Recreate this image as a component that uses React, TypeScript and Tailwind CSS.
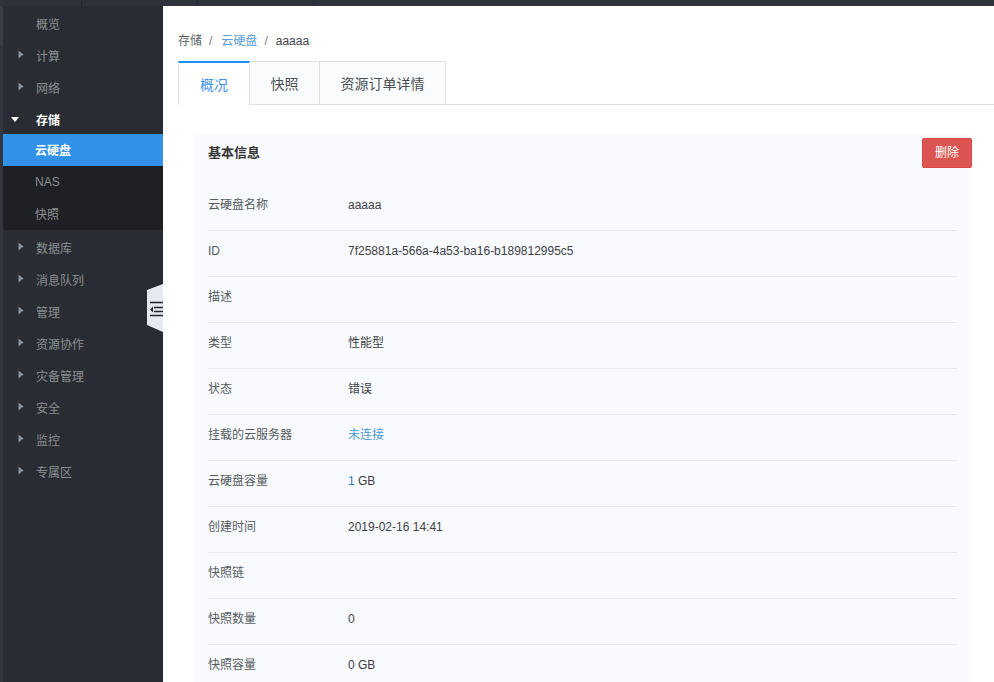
function Arrow() {
  return (
    <svg width="6" height="9" viewBox="0 0 6 9" className="absolute left-[15px] top-[10px]">
      <path d="M0.5 0.5 L5.5 4.5 L0.5 8.5 Z" fill="#87909a" />
    </svg>
  );
}
function Item({ label, arrow = true }: { label: string; arrow?: boolean }) {
  return (
    <div className="relative h-8 pl-[33px] leading-[34px] text-[12px] text-[#8b8f94]">
      {arrow && <Arrow />}
      {label}
    </div>
  );
}
function Row({ label, children, last }: { label: string; children?: React.ReactNode; last?: boolean }) {
  return (
    <div className={`flex h-[46px] items-center pb-[6px] text-[12px] ${last ? "" : "border-b border-[#e6e9f0]"}`}>
      <div className="w-[140px] text-[#555a60]">{label}</div>
      <div className="text-[#3d4147]">{children}</div>
    </div>
  );
}
export default function App() {
  return (
    <div className="flex h-[682px] w-[994px] flex-col overflow-hidden bg-white font-['Liberation_Sans','Noto_Sans_CJK_SC',sans-serif]">
      <div className="flex h-[6px] shrink-0 bg-[#2f313b]">
        <div className="h-full w-[82px] border-r border-[#23252c]" />
        <div className="h-full w-[116px] border-r border-[#23252c]" />
        <div className="h-full w-[116px] border-r border-[#23252c]" />
      </div>
      <div className="flex min-h-0 flex-1">
        <aside className="relative flex w-[163px] shrink-0 border-l-[3px] border-[#33363f] bg-[#292c32]">
          <div className="absolute left-[-3px] top-0 h-[39px] w-[3px] bg-[#3b3e46]" />
          <div className="w-full py-[2px]">
            <Item label="概览" arrow={false} />
            <Item label="计算" />
            <Item label="网络" />
            <div className="relative h-[30px] pl-[33px] text-[12px] font-bold leading-[34px] text-white">
              <svg width="8" height="5" viewBox="0 0 8 5" className="absolute left-[8px] top-[13px]">
                <path d="M0 0 H8 L4 5 Z" fill="#ffffff" />
              </svg>
              存储
            </div>
            <div className="bg-[#1f2025]">
              <div className="h-8 bg-[#3291e9] pl-[32px] text-[12px] font-bold leading-[34px] text-white">云硬盘</div>
              <div className="h-8 pl-[32px] text-[12px] leading-8 text-[#8b8f94]">NAS</div>
              <div className="h-8 pl-[32px] text-[12px] leading-[34px] text-[#8b8f94]">快照</div>
            </div>
            <div className="h-[2px]" />
            <Item label="数据库" />
            <Item label="消息队列" />
            <Item label="管理" />
            <Item label="资源协作" />
            <Item label="灾备管理" />
            <Item label="安全" />
            <Item label="监控" />
            <Item label="专属区" />
          </div>
          <svg width="16" height="48" viewBox="0 0 16 48" className="absolute left-[144px] top-[278px]">
            <path d="M16 0 L0 6 V41 L16 48 Z" fill="#e6e9f2" />
            <path d="M3 18.5 H16 M7 23.5 H16 M7 27.5 H16 M3 31.5 H16" stroke="#23252c" strokeWidth="1.3" />
            <path d="M6 22.5 L3 25.5 L6 28.5 Z" fill="#23252c" />
          </svg>
        </aside>
        <main className="min-w-0 flex-1 pl-[15px]">
          <div className="flex h-[55px] items-start gap-[7px] pt-[28px] text-[12px] leading-[14px] text-[#5a5f66]">
            <span>存储</span>
            <span className="mr-[2px] text-[#777]">/</span>
            <span className="text-[#5a9ed6]">云硬盘</span>
            <span className="mr-[1px] text-[#777]">/</span>
            <span className="text-[#3d4147]">aaaaa</span>
          </div>
          <div className="flex h-[44px] border-b border-[#dde0e6] text-[14px]">
            <div className="flex h-[44px] w-[72px] items-center justify-center border-x border-[#dde0e6] border-t-2 border-t-[#1e90f0] bg-white pt-[2px] text-[#3f8fef]">概况</div>
            <div className="flex h-[43px] w-[70px] items-center justify-center border-r border-t border-[#dde0e6] bg-[#f9fbfd] pt-[2px] text-[#4b4f55]">快照</div>
            <div className="flex h-[43px] w-[126px] items-center justify-center border-r border-t border-[#dde0e6] bg-[#f9fbfd] pt-[2px] text-[#4b4f55]">资源订单详情</div>
          </div>
          <section className="ml-[15px] mr-[22px] mt-[30px] bg-[#f9fafe] px-[15px]">
            <div className="relative h-[50px]">
              <div className="pt-[8px] text-[13px] font-bold text-[#333]">基本信息</div>
              <button className="absolute right-[-15px] top-[3px] h-[30px] w-[50px] rounded-[2px] border border-[#d94a46] bg-[#dc5552] text-[12px] text-white">删除</button>
            </div>
            <Row label="云硬盘名称">aaaaa</Row>
            <Row label="ID">7f25881a-566a-4a53-ba16-b189812995c5</Row>
            <Row label="描述" />
            <Row label="类型">性能型</Row>
            <Row label="状态">错误</Row>
            <Row label="挂载的云服务器"><span className="text-[#4a9ad4]">未连接</span></Row>
            <Row label="云硬盘容量"><span className="text-[#2f7fc1]">1</span> GB</Row>
            <Row label="创建时间">2019-02-16 14:41</Row>
            <Row label="快照链" />
            <Row label="快照数量">0</Row>
            <Row label="快照容量" last>0 GB</Row>
          </section>
        </main>
      </div>
    </div>
  );
}
